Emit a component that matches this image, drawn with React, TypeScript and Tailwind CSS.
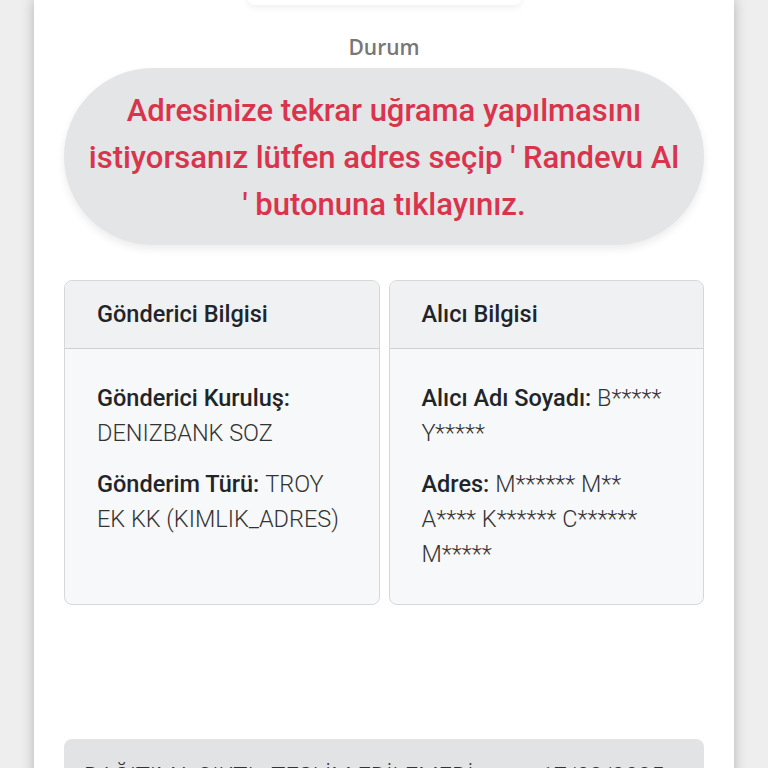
export default function App() {
  return (
    <div className="min-h-screen bg-[#eeeeee] flex justify-center overflow-hidden" style={{ fontFamily: "Roboto, 'Liberation Sans', sans-serif" }}>
      <div className="w-[700px] bg-white shadow-[0_0_12px_rgba(0,0,0,0.25)] px-[30px] pb-10 flex flex-col">
        {/* top button remnant */}
        <div className="mx-auto w-[275px] h-[40px] -mt-[35px] bg-white rounded-b-lg shadow-[0_3px_6px_rgba(0,0,0,0.06)]"></div>

        {/* Durum */}
        <div className="mt-[28px] text-center text-[21px] leading-[28px] font-semibold text-[#777777]" style={{ fontFamily: "'Open Sans', sans-serif" }}>
          Durum
        </div>
        <div className="mt-[7px] rounded-full bg-[#e4e5e7] shadow-[0_4px_8px_rgba(0,0,0,0.08)] px-[20px] pt-[19px] pb-[17px] text-center text-[31px] leading-[47px] font-medium text-[#d9344b]">
          Adresinize tekrar uğrama yapılmasını istiyorsanız lütfen adres seçip ' Randevu Al ' butonuna tıklayınız.
        </div>

        {/* Info cards */}
        <div className="mt-[35px] grid grid-cols-2 gap-[9px]">
          <div className="rounded-lg border border-[#d6d7d9] bg-[#f7f8fa] overflow-hidden">
            <div className="bg-[#f0f1f3] border-b border-[#cfd0d2] px-[32px] py-[19px] text-[23.5px] leading-[29px] font-medium text-[#212529]">
              Gönderici Bilgisi
            </div>
            <div className="px-[32px] pt-[32px] pb-[32px] text-[23.5px] leading-[35px] text-[#333333] flex flex-col gap-[16px]">
              <p><span className="font-medium text-[#212529]">Gönderici Kuruluş:</span> <span className="font-light">DENIZBANK SOZ</span></p>
              <p><span className="font-medium text-[#212529]">Gönderim Türü:</span> <span className="font-light">TROY EK KK (KIMLIK_ADRES)</span></p>
            </div>
          </div>
          <div className="rounded-lg border border-[#d6d7d9] bg-[#f7f8fa] overflow-hidden">
            <div className="bg-[#f0f1f3] border-b border-[#cfd0d2] px-[32px] py-[19px] text-[23.5px] leading-[29px] font-medium text-[#212529]">
              Alıcı Bilgisi
            </div>
            <div className="px-[32px] pt-[32px] pb-[32px] text-[23.5px] leading-[35px] text-[#333333] flex flex-col gap-[16px]">
              <p><span className="font-medium text-[#212529]">Alıcı Adı Soyadı:</span> <span className="font-light">B***** Y*****</span></p>
              <p><span className="font-medium text-[#212529]">Adres:</span> <span className="font-light">M****** M** A**** K****** C****** M*****</span></p>
            </div>
          </div>
        </div>

        {/* Status history */}
        <div className="mt-[134px] rounded-lg bg-[#e2e3e5] pl-[20px] pr-[40px] pt-[22px] pb-[20px] flex justify-between text-[23.5px] leading-[30px] font-light text-[#333333]">
          <span>DAĞITIMA ÇIKTI - TESLİM EDİLEMEDİ</span>
          <span>17/03/2025</span>
        </div>
      </div>
    </div>
  );
}
